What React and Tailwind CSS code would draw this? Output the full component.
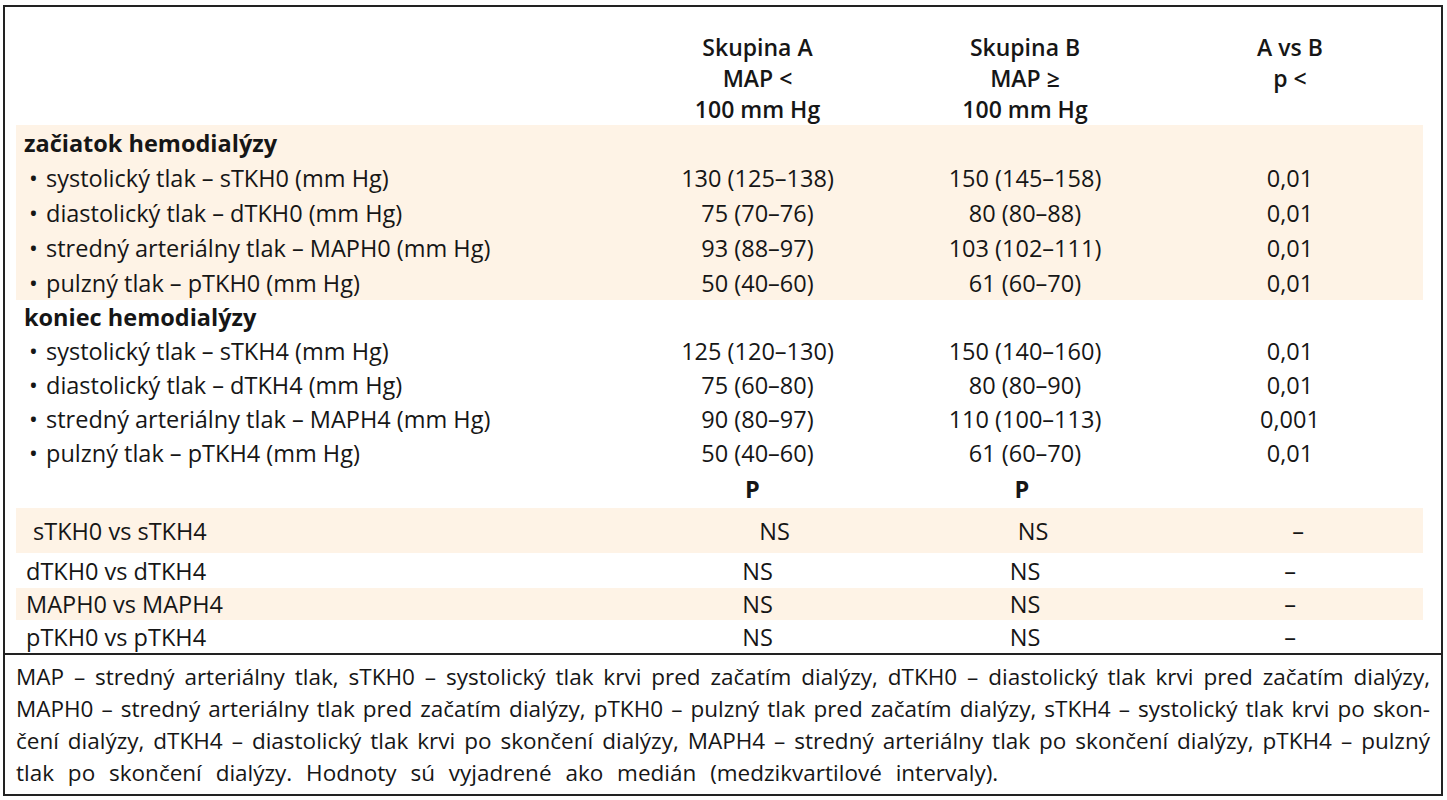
const topRows = [
  { label: "systolický tlak – sTKH0 (mm Hg)", a: "130 (125–138)", b: "150 (145–158)", c: "0,01" },
  { label: "diastolický tlak – dTKH0 (mm Hg)", a: "75 (70–76)", b: "80 (80–88)", c: "0,01" },
  { label: "stredný arteriálny tlak – MAPH0 (mm Hg)", a: "93 (88–97)", b: "103 (102–111)", c: "0,01" },
  { label: "pulzný tlak – pTKH0 (mm Hg)", a: "50 (40–60)", b: "61 (60–70)", c: "0,01" },
];

const endRows = [
  { label: "systolický tlak – sTKH4 (mm Hg)", a: "125 (120–130)", b: "150 (140–160)", c: "0,01" },
  { label: "diastolický tlak – dTKH4 (mm Hg)", a: "75 (60–80)", b: "80 (80–90)", c: "0,01" },
  { label: "stredný arteriálny tlak – MAPH4 (mm Hg)", a: "90 (80–97)", b: "110 (100–113)", c: "0,001" },
  { label: "pulzný tlak – pTKH4 (mm Hg)", a: "50 (40–60)", b: "61 (60–70)", c: "0,01" },
];

const cols = "grid grid-cols-[624px_235px_300px_230px_1fr] items-center leading-[30px]";

function BulletRow({ row, h }) {
  return (
    <div className={`${cols} ${h}`}>
      <div className="pl-[13px] flex">
        <span className="w-[17px]">•</span>
        <span>{row.label}</span>
      </div>
      <div className="text-center">{row.a}</div>
      <div className="text-center">{row.b}</div>
      <div className="text-center">{row.c}</div>
      <div />
    </div>
  );
}

function SectionRow({ title, h }) {
  return (
    <div className={`${cols} ${h}`}>
      <div className="pl-[8px] font-bold">{title}</div>
    </div>
  );
}

export default function App() {
  return (
    <div className="min-h-screen bg-white pt-[5px] pl-[3px] text-[#161616] font-['Open_Sans',sans-serif] text-[23.5px]">
      <div className="w-[1440px] h-[791px] border-2 border-[#222] flex flex-col">
        {/* Table */}
        <div className="pl-[11px] pr-[18px]">
          {/* Header */}
          <div className="grid grid-cols-[624px_235px_300px_230px_1fr] pt-[25px] font-semibold leading-[31px] text-[23px]">
            <div />
            <div className="text-center flex flex-col">
              <span>Skupina A</span>
              <span>MAP &lt;</span>
              <span>100 mm Hg</span>
            </div>
            <div className="text-center flex flex-col">
              <span>Skupina B</span>
              <span>MAP ≥</span>
              <span>100 mm Hg</span>
            </div>
            <div className="text-center flex flex-col">
              <span>A vs B</span>
              <span>p &lt;</span>
            </div>
            <div />
          </div>

          {/* Začiatok */}
          <div className="bg-[#fef3e6]">
            <SectionRow title="začiatok hemodialýzy" h="h-[35px]" />
            {topRows.map((r, i) => (
              <BulletRow key={i} row={r} h="h-[35px]" />
            ))}
          </div>

          {/* Koniec */}
          <div>
            <SectionRow title="koniec hemodialýzy" h="h-[34px]" />
            {endRows.map((r, i) => (
              <BulletRow key={i} row={r} h="h-[34px]" />
            ))}
          </div>

          {/* P row */}
          <div className={`${cols} h-[38px] font-bold`}>
            <div />
            <div className="text-center pr-[10px]">P</div>
            <div className="text-center pr-[6px]">P</div>
          </div>

          {/* Comparisons */}
          <div className={`${cols} h-[45px] bg-[#fef3e6]`}>
            <div className="pl-[17px]">sTKH0 vs sTKH4</div>
            <div className="text-center pl-[34px]">NS</div>
            <div className="text-center pl-[16px]">NS</div>
            <div className="text-center pl-[16px]">–</div>
            <div />
          </div>
          <div className={`${cols} h-[35px]`}>
            <div className="pl-[10px]">dTKH0 vs dTKH4</div>
            <div className="text-center">NS</div>
            <div className="text-center">NS</div>
            <div className="text-center">–</div>
            <div />
          </div>
          <div className={`${cols} h-[32px] bg-[#fef3e6]`}>
            <div className="pl-[10px]">MAPH0 vs MAPH4</div>
            <div className="text-center">NS</div>
            <div className="text-center">NS</div>
            <div className="text-center">–</div>
            <div />
          </div>
          <div className={`${cols} h-[33px]`}>
            <div className="pl-[10px]">pTKH0 vs pTKH4</div>
            <div className="text-center">NS</div>
            <div className="text-center">NS</div>
            <div className="text-center">–</div>
            <div />
          </div>
        </div>

        {/* Footnote */}
        <div className="border-t-2 border-[#222] px-[11px] pt-[6px] leading-[32px] text-[22.5px]">
          <p className="text-justify [text-align-last:justify]">
            MAP – stredný arteriálny tlak, sTKH0 – systolický tlak krvi pred začatím dialýzy, dTKH0 – diastolický tlak krvi pred začatím dialýzy,
          </p>
          <p className="text-justify [text-align-last:justify]">
            MAPH0 – stredný arteriálny tlak pred začatím dialýzy, pTKH0 – pulzný tlak pred začatím dialýzy, sTKH4 – systolický tlak krvi po skon-
          </p>
          <p className="text-justify [text-align-last:justify]">
            čení dialýzy, dTKH4 – diastolický tlak krvi po skončení dialýzy, MAPH4 – stredný arteriálny tlak po skončení dialýzy, pTKH4 – pulzný
          </p>
          <p className="[word-spacing:8px]">tlak po skončení dialýzy. Hodnoty sú vyjadrené ako medián (medzikvartilové intervaly).</p>
        </div>
      </div>
    </div>
  );
}
